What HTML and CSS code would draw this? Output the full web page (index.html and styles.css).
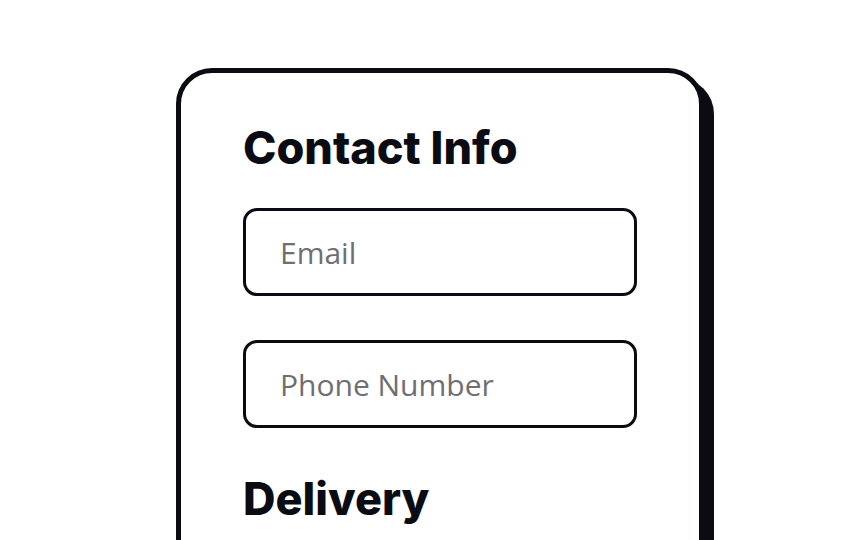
FILE: index.html
```html
<!DOCTYPE html>
<html>
<head>
<meta charset="utf-8">
<link rel="stylesheet" href="styles.css">
</head>
<body>
<main class="stage">
  <section class="card">
    <h2 class="title">Contact Info</h2>
    <input class="field" type="text" placeholder="Email">
    <input class="field" type="text" placeholder="Phone Number">
    <h2 class="title title-next">Delivery</h2>
  </section>
</main>
</body>
</html>
```
FILE: styles.css
```css
html, body {
  margin: 0;
  padding: 0;
  background: #ffffff;
  height: 100%;
  overflow: hidden;
}
.stage {
  padding: 68px 0 0 176px;
}
.card {
  box-sizing: border-box;
  width: 528px;
  height: 600px;
  border: 5px solid #0b0b14;
  border-radius: 36px;
  box-shadow: 10px 10px 0 #0b0b14;
  background: #ffffff;
  padding: 47px 62px 0 62px;
  display: flex;
  flex-direction: column;
}
.title {
  margin: 0;
  font-family: Inter, "Noto Sans", sans-serif;
  font-weight: 800;
  font-size: 45px;
  line-height: 56px;
  color: #0b0b14;
  letter-spacing: 0;
}
.field {
  box-sizing: border-box;
  flex: none;
  height: 88px;
  width: 100%;
  border: 3px solid #0b0b14;
  border-radius: 14px;
  padding: 0 0 0 34px;
  font-family: "Open Sans", sans-serif;
  font-size: 30px;
  color: #0b0b14;
  outline: none;
  margin-top: 44px;
}
.title + .field {
  margin-top: 32px;
}
.field::placeholder {
  color: #6e6e73;
}
.title-next {
  margin-top: 43px;
}
```
